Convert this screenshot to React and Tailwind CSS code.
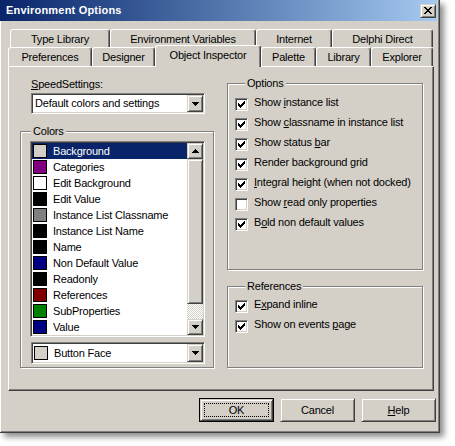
import React from "react";

// classic 3D edges
const raised =
  "border border-t-[#d4d0c8] border-l-[#d4d0c8] border-r-[#404040] border-b-[#404040] shadow-[inset_1px_1px_0_#ffffff,inset_-1px_-1px_0_#808080] bg-[#d4d0c8]";
const sunken =
  "border border-t-[#808080] border-l-[#808080] border-r-white border-b-white shadow-[inset_1px_1px_0_#404040,inset_-1px_-1px_0_#d4d0c8]";

const ARROW_DOWN = ["XXXXXXX", ".XXXXX.", "..XXX..", "...X..."];
const ARROW_UP = ["...X...", "..XXX..", ".XXXXX.", "XXXXXXX"];
const CHECK = ["......X", ".....XX", "X...XXX", "XX.XXX.", "XXXXX..", ".XXX...", "..X...."];
const CLOSE = ["XX....XX", ".XX..XX.", "..XXXX..", "...XX...", "..XXXX..", ".XX..XX.", "XX....XX"];

function Pix({ rows }) {
  const w = rows[0].length;
  const h = rows.length;
  return (
    <svg width={w} height={h} viewBox={`0 0 ${w} ${h}`} shapeRendering="crispEdges" className="block">
      {rows.map((r, y) =>
        [...r].map((c, x) =>
          c === "X" ? <rect key={`${x}-${y}`} x={x} y={y} width="1" height="1" fill="#000" /> : null
        )
      )}
    </svg>
  );
}

function Tab({ label, w, selected }) {
  if (selected) {
    return (
      <div
        className={`${w} relative z-10 -mt-[2px] -mb-[1px] h-[22px] flex justify-center pt-[1px] bg-[#d4d0c8] border-l border-t border-r border-l-white border-t-white border-r-[#404040] rounded-t-[3px] shadow-[inset_-1px_0_0_#808080]`}
      >
        {label}
      </div>
    );
  }
  return (
    <div
      className={`${w} h-full flex justify-center pt-[1px] border-l border-t border-r border-l-white border-t-white border-r-[#404040] rounded-t-[3px] shadow-[inset_-1px_0_0_#808080]`}
    >
      {label}
    </div>
  );
}

function Check({ on, children }) {
  return (
    <div className="h-[20px] flex items-start">
      <div className={`${sunken} mt-[3px] w-[13px] h-[13px] bg-white flex items-center justify-center shrink-0`}>
        {on && <Pix rows={CHECK} />}
      </div>
      <span className="ml-[6px] leading-[13px] mt-[1px]">{children}</span>
    </div>
  );
}

function DropButton() {
  return (
    <div className={`${raised} w-[16px] h-full flex items-center justify-center`}>
      <Pix rows={ARROW_DOWN} />
    </div>
  );
}

function GroupBox({ label, className, children }) {
  return (
    <fieldset
      className={`${className} border border-[#808080] shadow-[1px_1px_0_#ffffff,inset_1px_1px_0_#ffffff]`}
    >
      <legend className="ml-[10px] px-[2px] bg-[#d4d0c8] leading-[13px]">{label}</legend>
      {children}
    </fieldset>
  );
}

const colors = [
  ["Background", "bg-[#d4d0c8]"],
  ["Categories", "bg-[#800080]"],
  ["Edit Background", "bg-white"],
  ["Edit Value", "bg-black"],
  ["Instance List Classname", "bg-[#808080]"],
  ["Instance List Name", "bg-black"],
  ["Name", "bg-black"],
  ["Non Default Value", "bg-[#000080]"],
  ["Readonly", "bg-black"],
  ["References", "bg-[#800000]"],
  ["SubProperties", "bg-[#008000]"],
  ["Value", "bg-[#000080]"],
];

export default function App() {
  return (
    <div className="w-[455px] h-[446px] bg-white text-[11px] tracking-[-0.2px] text-black font-['Liberation_Sans',Arial,sans-serif] select-none">
      <div className="w-[440px] h-[433px] bg-[#d4d0c8] border-r border-b border-[#404040] shadow-[inset_-1px_-1px_0_#808080,4px_4px_6px_rgba(0,0,0,0.45)] flex flex-col">
        {/* title bar */}
        <div className="mr-[2px] h-[21px] bg-gradient-to-r from-[#0a246a] to-[#a6caf0] flex items-center pl-[6px]">
          <span className="text-white font-bold tracking-[0.2px]">Environment Options</span>
          <div className={`${raised} ml-auto mr-[1px] w-[16px] h-[14px] flex items-center justify-center`}>
            <Pix rows={CLOSE} />
          </div>
        </div>

        <div className="flex-1 border-l border-white flex flex-col">
          {/* tabs, back row */}
          <div className="mt-[8px] h-[18px] flex pl-[9px]">
            <Tab label="Type Library" w="w-[100px]" />
            <Tab label="Environment Variables" w="w-[146px]" />
            <Tab label="Internet" w="w-[76px]" />
            <Tab label="Delphi Direct" w="w-[101px]" />
          </div>
          {/* tabs, front row */}
          <div className="h-[19px] flex items-start pl-[7px]">
            <Tab label="Preferences" w="w-[84px]" />
            <Tab label="Designer" w="w-[63px]" />
            <Tab label="Object Inspector" w="w-[106px]" selected />
            <Tab label="Palette" w="w-[55px]" />
            <Tab label="Library" w="w-[55px]" />
            <Tab label="Explorer" w="w-[62px]" />
          </div>

          {/* page */}
          <div className="ml-[7px] w-[426px] h-[325px] border-l border-t border-l-white border-t-white border-r border-b border-r-[#404040] border-b-[#404040] shadow-[inset_-1px_-1px_0_#808080] flex pl-[11px]">
            <div className="w-[194px] flex flex-col">
              <div className="mt-[11px] ml-[11px] leading-[13px]">
                <span className="underline">S</span>peedSettings:
              </div>
              <div className={`${sunken} mt-[2px] ml-[11px] w-[174px] h-[21px] bg-white flex p-[1px]`}>
                <span className="flex-1 pl-[2px] leading-[17px]">Default colors and settings</span>
                <DropButton />
              </div>

              <GroupBox label="Colors" className="mt-[11px] h-[243px] pt-[3px]">
                <div className={`${sunken} ml-[9px] w-[175px] h-[196px] bg-white flex p-[1px]`}>
                  <div className="flex-1 flex flex-col">
                    {colors.map(([name, sw], i) => (
                      <div
                        key={name}
                        className={`h-[16px] flex items-center ${i === 0 ? "bg-[#0a246a] text-white" : ""}`}
                      >
                        <div className={`ml-[1px] w-[14px] h-[14px] border border-black ${sw}`} />
                        <span className="ml-[6px] leading-[13px]">{name}</span>
                      </div>
                    ))}
                  </div>
                  {/* scroll bar */}
                  <div className="w-[16px] flex flex-col">
                    <div className={`${raised} h-[16px] flex items-center justify-center`}>
                      <Pix rows={ARROW_UP} />
                    </div>
                    <div className={`${raised} h-[145px]`} />
                    <div className="h-[15px] bg-[repeating-conic-gradient(#d4d0c8_0_25%,#ffffff_0_50%)] bg-[length:2px_2px]" />
                    <div className={`${raised} h-[16px] flex items-center justify-center`}>
                      <Pix rows={ARROW_DOWN} />
                    </div>
                  </div>
                </div>
                <div className={`${sunken} mt-[5px] ml-[10px] w-[174px] h-[22px] bg-white flex items-center p-[1px]`}>
                  <div className="ml-[1px] w-[14px] h-[14px] border border-black bg-[#d4d0c8]" />
                  <span className="flex-1 ml-[6px] leading-[13px]">Button Face</span>
                  <DropButton />
                </div>
              </GroupBox>
            </div>

            <div className="ml-[13px] w-[196px] flex flex-col">
              <GroupBox label="Options" className="mt-[10px] h-[193px] pl-[7px] pt-[5px]">
                <Check on>Show <span className="underline">i</span>nstance list</Check>
                <Check on>Show <span className="underline">c</span>lassname in instance list</Check>
                <Check on>Show status <span className="underline">b</span>ar</Check>
                <Check on>Render background <span className="underline">g</span>rid</Check>
                <Check on><span className="underline">I</span>ntegral height (when not docked)</Check>
                <Check>Show <span className="underline">r</span>ead only properties</Check>
                <Check on>B<span className="underline">o</span>ld non default values</Check>
              </GroupBox>
              <GroupBox label="References" className="mt-[10px] h-[88px] pl-[7px] pt-[4px]">
                <Check on>E<span className="underline">x</span>pand inline</Check>
                <Check on>Show on events <span className="underline">p</span>age</Check>
              </GroupBox>
            </div>
          </div>

          {/* dialog buttons */}
          <div className="mt-[7px] flex justify-end gap-[6px] pr-[3px]">
            <div className="w-[75px] h-[24px] border border-black">
              <div className={`${raised} h-full p-[3px]`}>
                <div className="h-full border border-dotted border-black flex items-center justify-center leading-[13px]">
                  OK
                </div>
              </div>
            </div>
            <div className={`${raised} w-[75px] h-[24px] flex items-center justify-center leading-[13px]`}>
              Cancel
            </div>
            <div className={`${raised} w-[75px] h-[24px] flex items-center justify-center leading-[13px]`}>
              <span><span className="underline">H</span>elp</span>
            </div>
          </div>
        </div>
      </div>
    </div>
  );
}
